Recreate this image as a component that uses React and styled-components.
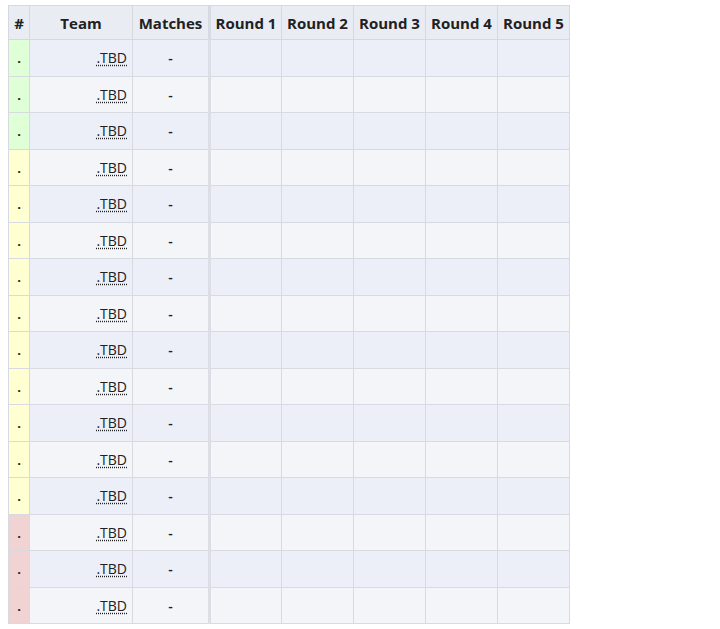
import React from "react";
import styled, { createGlobalStyle } from "styled-components";

const Global = createGlobalStyle`
  body {
    margin: 0;
    padding: 5px 8px;
    background: #ffffff;
    font-family: "Open Sans", "DejaVu Sans", sans-serif;
    color: #202122;
  }
`;

const Table = styled.table`
  border-collapse: collapse;
  font-size: 14px;
  table-layout: fixed;
  width: 561px;
`;

const Th = styled.th`
  background: #eaecf3;
  border: 1px solid #d6d8df;
  font-weight: 700;
  font-size: 15px;
  height: 33px;
  padding: 0 2px;
  text-align: center;
  white-space: nowrap;
  border-left: ${(p) => (p.$split ? "3px solid #d8dae3" : "1px solid #d6d8df")};
`;

const Tr = styled.tr`
  background: ${(p) => (p.$odd ? "#eceef8" : "#f4f5f9")};
`;

const Td = styled.td`
  border: 1px solid #d8dae2;
  height: 35.5px;
  padding: 0 5px;
  text-align: ${(p) => p.$align || "center"};
  border-left: ${(p) => (p.$split ? "3px solid #dcdee6" : "1px solid #d8dae2")};
`;

const Pos = styled(Td)`
  background: ${(p) => p.$bg};
  padding: 0;
  font-weight: 700;
`;

const Dot = styled.span`
  font-size: 13px;
`;

const Abbr = styled.abbr`
  text-decoration: underline dotted;
  text-underline-offset: 2px;
  font-size: 14px;
  color: #202122;
`;

const Dash = styled.span`
  font-weight: 600;
`;

const colors = {
  g: "#dfffd6",
  y: "#ffffd2",
  r: "#f2d3d3",
};

const rows = Array.from({ length: 16 }, (_, i) =>
  i < 3 ? colors.g : i < 13 ? colors.y : colors.r
);

export default function App() {
  return (
    <>
      <Global />
      <Table>
        <colgroup>
          <col style={{ width: 21 }} />
          <col style={{ width: 103 }} />
          <col style={{ width: 77 }} />
          <col style={{ width: 72 }} />
          <col style={{ width: 72 }} />
          <col style={{ width: 72 }} />
          <col style={{ width: 72 }} />
          <col style={{ width: 72 }} />
        </colgroup>
        <thead>
          <tr>
            <Th>#</Th>
            <Th>Team</Th>
            <Th>Matches</Th>
            <Th $split>Round 1</Th>
            <Th>Round 2</Th>
            <Th>Round 3</Th>
            <Th>Round 4</Th>
            <Th>Round 5</Th>
          </tr>
        </thead>
        <tbody>
          {rows.map((bg, i) => (
            <Tr key={i} $odd={i % 2 === 0}>
              <Pos $bg={bg}>
                <Dot>.</Dot>
              </Pos>
              <Td $align="right">
                <Abbr title="To be determined">.TBD</Abbr>
              </Td>
              <Td>
                <Dash>-</Dash>
              </Td>
              <Td $split />
              <Td />
              <Td />
              <Td />
              <Td />
            </Tr>
          ))}
        </tbody>
      </Table>
    </>
  );
}
